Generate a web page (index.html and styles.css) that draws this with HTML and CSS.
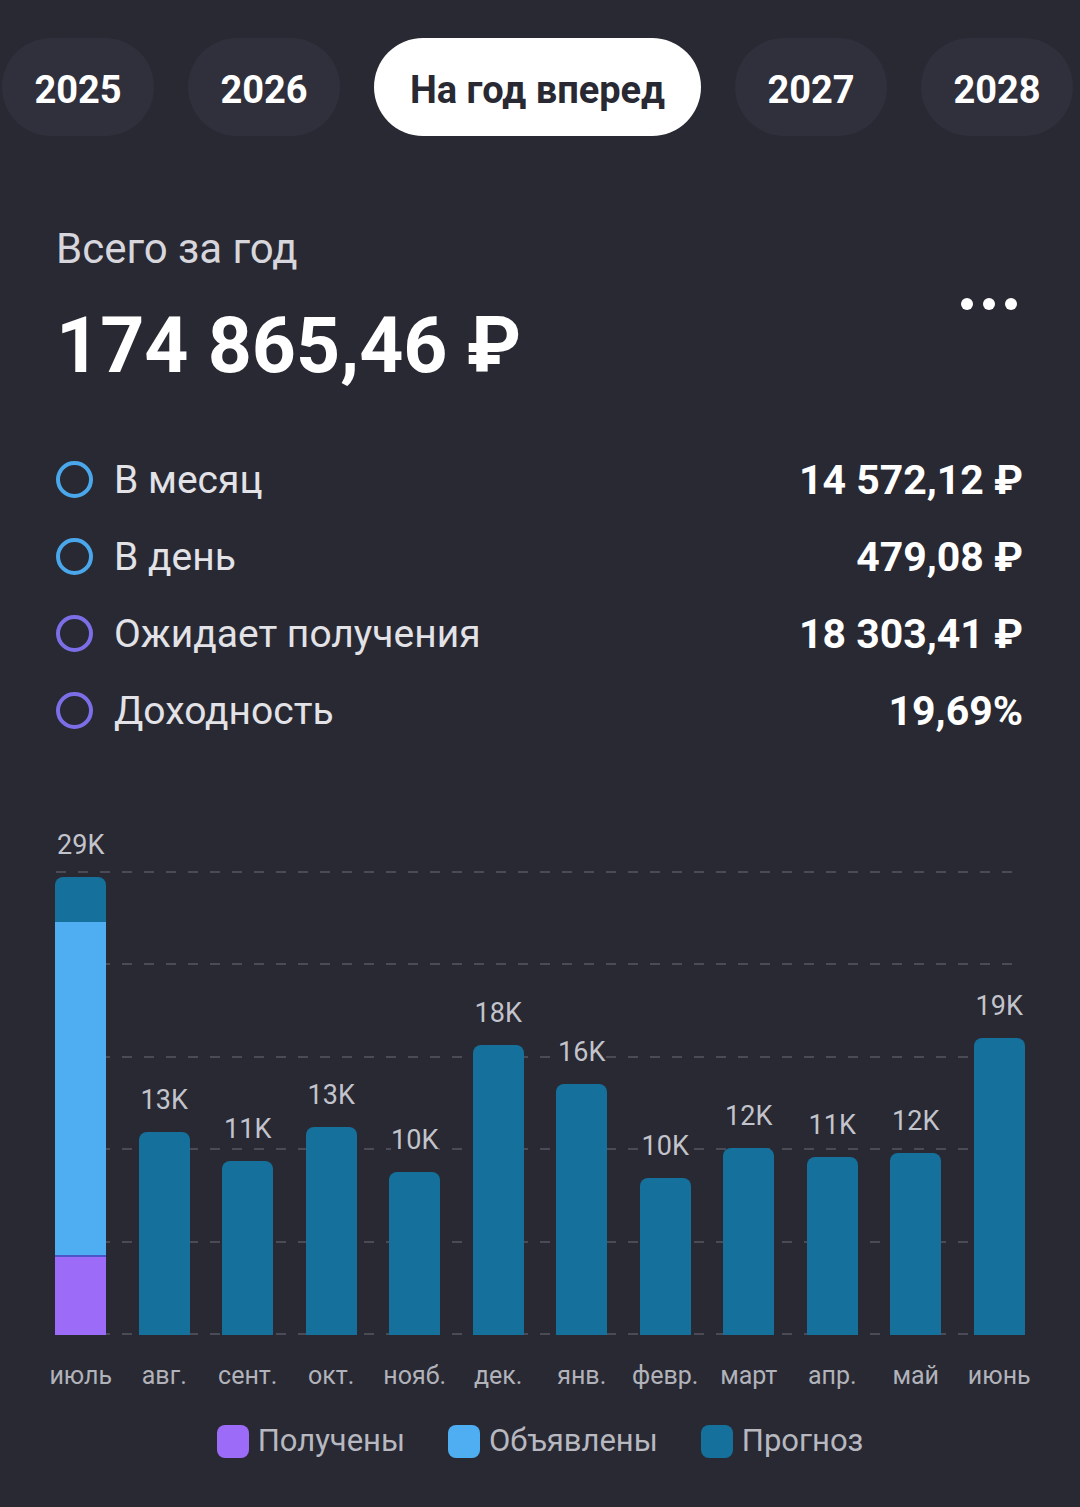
FILE: index.html
```html
<!DOCTYPE html>
<html lang="ru">
<head>
    <meta charset="UTF-8">
    <meta name="viewport" content="width=device-width, initial-scale=1.0">
    <title>Дивиденды</title>
    <link rel="stylesheet" href="styles.css">
</head>
<body>
    <div class="tabs">
        <div class="tab">2025</div>
        <div class="tab">2026</div>
        <div class="tab tab-active">На год вперед</div>
        <div class="tab">2027</div>
        <div class="tab">2028</div>
    </div>

    <div class="summary">
        <div class="summary-head">
            <div>
                <div class="summary-title">Всего за год</div>
                <div class="summary-total">174 865,46 ₽</div>
            </div>
            <div class="more"><span></span><span></span><span></span></div>
        </div>

        <div class="stats">
            <div class="stat">
                <span class="ring ring-blue"></span>
                <span class="stat-label">В месяц</span>
                <span class="stat-value">14 572,12 ₽</span>
            </div>
            <div class="stat">
                <span class="ring ring-blue"></span>
                <span class="stat-label">В день</span>
                <span class="stat-value">479,08 ₽</span>
            </div>
            <div class="stat">
                <span class="ring ring-purple"></span>
                <span class="stat-label">Ожидает получения</span>
                <span class="stat-value">18 303,41 ₽</span>
            </div>
            <div class="stat">
                <span class="ring ring-purple"></span>
                <span class="stat-label">Доходность</span>
                <span class="stat-value">19,69%</span>
            </div>
        </div>
    </div>

    <div class="chart">
        <div class="plot">
            <div class="grid">
                <div class="grid-line"></div>
                <div class="grid-line"></div>
                <div class="grid-line"></div>
                <div class="grid-line"></div>
                <div class="grid-line"></div>
                <div class="grid-line"></div>
            </div>
            <div class="col">
                <span class="val">29K</span>
                <div class="bar" style="height:458px">
                    <div class="seg seg-forecast" style="height:45px"></div>
                    <div class="seg seg-declared" style="height:333px"></div>
                    <div class="seg seg-received" style="height:80px"></div>
                </div>
            </div>
            <div class="col"><span class="val">13K</span><div class="bar bar-forecast" style="height:203px"></div></div>
            <div class="col"><span class="val">11K</span><div class="bar bar-forecast" style="height:174px"></div></div>
            <div class="col"><span class="val">13K</span><div class="bar bar-forecast" style="height:208px"></div></div>
            <div class="col"><span class="val">10K</span><div class="bar bar-forecast" style="height:163px"></div></div>
            <div class="col"><span class="val">18K</span><div class="bar bar-forecast" style="height:290px"></div></div>
            <div class="col"><span class="val">16K</span><div class="bar bar-forecast" style="height:251px"></div></div>
            <div class="col"><span class="val">10K</span><div class="bar bar-forecast" style="height:157px"></div></div>
            <div class="col"><span class="val">12K</span><div class="bar bar-forecast" style="height:187px"></div></div>
            <div class="col"><span class="val">11K</span><div class="bar bar-forecast" style="height:178px"></div></div>
            <div class="col"><span class="val">12K</span><div class="bar bar-forecast" style="height:182px"></div></div>
            <div class="col"><span class="val">19K</span><div class="bar bar-forecast" style="height:297px"></div></div>
        </div>

        <div class="months">
            <span>июль</span>
            <span>авг.</span>
            <span>сент.</span>
            <span>окт.</span>
            <span>нояб.</span>
            <span>дек.</span>
            <span>янв.</span>
            <span>февр.</span>
            <span>март</span>
            <span>апр.</span>
            <span>май</span>
            <span>июнь</span>
        </div>

        <div class="legend">
            <div class="legend-item"><span class="swatch swatch-received"></span>Получены</div>
            <div class="legend-item"><span class="swatch swatch-declared"></span>Объявлены</div>
            <div class="legend-item"><span class="swatch swatch-forecast"></span>Прогноз</div>
        </div>
    </div>
</body>
</html>
```

FILE: styles.css
```css
body {
    margin: 0;
    background-color: #282933;
    font-family: Roboto, "Liberation Sans", sans-serif;
    color: #ffffff;
}

/* year tabs */
.tabs {
    display: flex;
    gap: 34px;
    padding: 38px 0 0 2px;
}
.tab {
    width: 152px;
    height: 98px;
    box-sizing: border-box;
    padding-top: 5px;
    flex-shrink: 0;
    border-radius: 49px;
    background-color: #2f303b;
    display: flex;
    align-items: center;
    justify-content: center;
    font-size: 38px;
    font-weight: 700;
}
.tab-active {
    width: 327px;
    background-color: #ffffff;
    color: #282933;
}

/* totals */
.summary {
    padding: 0 57px 0 56px;
}
.summary-head {
    display: flex;
    align-items: center;
    justify-content: space-between;
    margin-top: 88px;
}
.summary-title {
    font-size: 42px;
    line-height: 50px;
    color: #d6d6dc;
}
.summary-total {
    margin-top: 27px;
    font-size: 77px;
    line-height: 90px;
    font-weight: 700;
}
.more {
    display: flex;
    gap: 10px;
    margin-right: 6px;
    margin-top: -8px;
}
.more span {
    width: 12px;
    height: 12px;
    border-radius: 50%;
    background-color: #ffffff;
}

.stats {
    margin-top: 50px;
}
.stat {
    display: flex;
    align-items: center;
    height: 77px;
}
.ring {
    width: 37px;
    height: 37px;
    box-sizing: border-box;
    border: 4px solid;
    border-radius: 50%;
}
.ring-blue {
    border-color: #4aa7eb;
}
.ring-purple {
    border-color: #7c6ee6;
}
.stat-label {
    margin-left: 21px;
    font-size: 39px;
    color: #e2e2e7;
}
.stat-value {
    margin-left: auto;
    font-size: 41px;
    font-weight: 700;
}

/* chart */
.chart {
    margin-top: 122px;
    padding: 0 39px;
}
.plot {
    position: relative;
    display: flex;
    height: 464px;
}
.grid {
    position: absolute;
    top: 0;
    bottom: 0;
    left: 17px;
    right: 17px;
    display: flex;
    flex-direction: column;
    justify-content: space-between;
}
.grid-line {
    height: 2px;
    background-image: repeating-linear-gradient(to right, #4a4b56 0 10px, transparent 10px 22px);
}
.col {
    position: relative;
    flex: 1;
    display: flex;
    flex-direction: column;
    align-items: center;
    justify-content: flex-end;
}
.val {
    flex-shrink: 0;
    margin-bottom: 17px;
    font-size: 27px;
    line-height: 30px;
    color: #c3c4cb;
    background-color: #282933;
}
.bar {
    flex-shrink: 0;
    width: 51px;
    border-radius: 8px 8px 0 0;
    overflow: hidden;
    display: flex;
    flex-direction: column;
}
.bar-forecast {
    background-color: #15709c;
}
.seg {
    flex-shrink: 0;
}
.seg-forecast {
    background-color: #15709c;
}
.seg-declared {
    background-color: #4eaef1;
}
.seg-received {
    box-sizing: border-box;
    border-top: 2px solid #4b57c6;
    background-color: #9c6bf7;
}

.months {
    display: flex;
    margin-top: 26px;
}
.months span {
    flex: 1;
    text-align: center;
    font-size: 25px;
    line-height: 30px;
    color: #b1b2ba;
}

.legend {
    display: flex;
    justify-content: center;
    gap: 43px;
    margin-top: 32px;
}
.legend-item {
    display: flex;
    align-items: center;
    gap: 9px;
    font-size: 31px;
    line-height: 36px;
    color: #b7b8c0;
}
.swatch {
    width: 32px;
    height: 33px;
    border-radius: 8px;
}
.swatch-received {
    background-color: #9c6bf7;
}
.swatch-declared {
    background-color: #4eaef1;
}
.swatch-forecast {
    background-color: #15709c;
}
```
